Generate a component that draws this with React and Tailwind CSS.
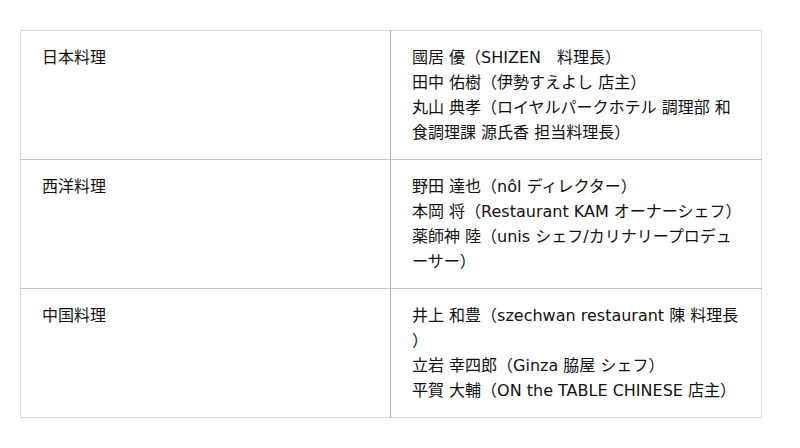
import React from "react";

const rows = [
  {
    genre: "日本料理",
    chefs: [
      "國居 優（SHIZEN　料理長）",
      "田中 佑樹（伊勢すえよし 店主）",
      "丸山 典孝（ロイヤルパークホテル 調理部 和食調理課 源氏香 担当料理長）",
    ],
  },
  {
    genre: "西洋料理",
    chefs: [
      "野田 達也（nôl ディレクター）",
      "本岡 将（Restaurant KAM オーナーシェフ）",
      "薬師神 陸（unis シェフ/カリナリープロデューサー）",
    ],
  },
  {
    genre: "中国料理",
    chefs: [
      "井上 和豊（szechwan restaurant 陳 料理長）",
      "立岩 幸四郎（Ginza 脇屋 シェフ）",
      "平賀 大輔（ON the TABLE CHINESE 店主）",
    ],
  },
];

export default function App() {
  return (
    <div className="min-h-[448px] bg-white pl-[20px] pt-[30px] font-['DejaVu_Sans','Noto_Sans_CJK_JP',sans-serif] text-[16px] leading-[25px] text-[#111]">
      <table className="w-[742px] table-fixed border-collapse border border-[#dcdcdc]">
        <colgroup>
          <col className="w-[370px]" />
          <col />
        </colgroup>
        <tbody>
          {rows.map((row) => (
            <tr key={row.genre} className="border-b border-[#c4c4c4] last:border-b-[#dcdcdc]">
              <td className="border-r border-[#b4b4b4] px-[21px] py-[14px] align-top">{row.genre}</td>
              <td className="px-[21px] py-[14px] align-top [line-break:anywhere]">
                {row.chefs.map((c) => (
                  <div key={c}>{c}</div>
                ))}
              </td>
            </tr>
          ))}
        </tbody>
      </table>
    </div>
  );
}
